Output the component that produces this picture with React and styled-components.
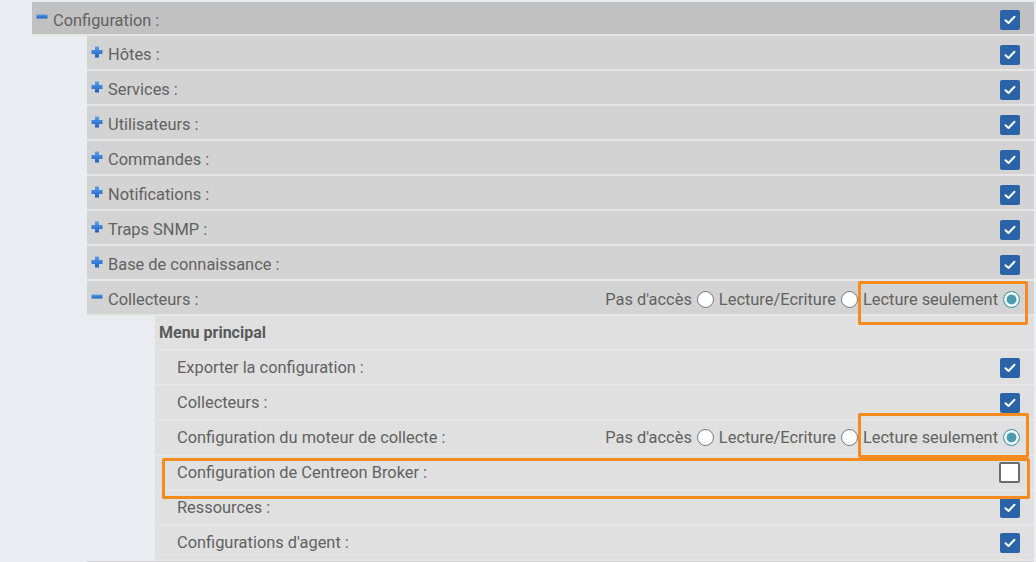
import styled, { createGlobalStyle } from "styled-components";

const GlobalStyle = createGlobalStyle`
  body {
    margin: 0;
    background: #e9edf2;
    font-family: Roboto, "Liberation Sans", sans-serif;
    color: #626262;
    overflow: hidden;
  }
`;

const level1 = [
  "Hôtes",
  "Services",
  "Utilisateurs",
  "Commandes",
  "Notifications",
  "Traps SNMP",
  "Base de connaissance",
];

const level2 = [
  { label: "Exporter la configuration", type: "check" },
  { label: "Collecteurs", type: "check" },
  { label: "Configuration du moteur de collecte", type: "radio" },
  { label: "Configuration de Centreon Broker", type: "empty" },
  { label: "Ressources", type: "check" },
  { label: "Configurations d'agent", type: "check" },
];

const Expander = ({ open }) =>
  open ? (
    <svg width="12" height="12" viewBox="0 0 12 12">
      <defs>
        <linearGradient id="mg" x1="0" y1="0" x2="0" y2="1">
          <stop offset="0" stopColor="#5aa0ea" />
          <stop offset="1" stopColor="#1b5fc0" />
        </linearGradient>
      </defs>
      <rect x="0.5" y="3.5" width="11" height="4" rx="0.5" fill="url(#mg)" />
    </svg>
  ) : (
    <svg width="12" height="12" viewBox="0 0 12 12">
      <defs>
        <linearGradient id="pg" x1="0" y1="0" x2="0" y2="1">
          <stop offset="0" stopColor="#5aa0ea" />
          <stop offset="1" stopColor="#1b5fc0" />
        </linearGradient>
      </defs>
      <path d="M4 0.5h4v3.5h3.5v4H8v3.5H4V8H0.5V4H4z" fill="url(#pg)" />
    </svg>
  );

const Check = () => (
  <CheckBox>
    <svg width="12" height="10" viewBox="0 0 12 10">
      <path d="M1.5 5.2 4.5 8 10.5 1.8" fill="none" stroke="#fff" strokeWidth="2" strokeLinecap="round" strokeLinejoin="round" />
    </svg>
  </CheckBox>
);

const Access = () => (
  <Radios>
    Pas d'accès <Radio />
    Lecture/Ecriture <Radio />
    Lecture seulement <Radio checked />
  </Radios>
);

const App = () => {
  return (
    <>
      <GlobalStyle />
      <Page>
        <Row tone="top" indent={4}>
          <Label>
            <Expander open />
            Configuration :
          </Label>
          <Check />
        </Row>
        <Children offset={55}>
          {level1.map((l) => (
            <Row key={l} tone="mid" indent={4}>
              <Label>
                <Expander />
                {l} :
              </Label>
              <Check />
            </Row>
          ))}
          <Row tone="mid" indent={4}>
            <Label>
              <Expander open />
              Collecteurs :
            </Label>
            <Access />
            <Highlight style={{ left: 771, top: 0, width: 170, height: 44 }} />
          </Row>
          <Children offset={68}>
            <Row tone="light" indent={4}>
              <Heading>Menu principal</Heading>
            </Row>
            {level2.map((item) => (
              <Row key={item.label} tone="light" indent={22}>
                <Label>{item.label} :</Label>
                {item.type === "check" && <Check />}
                {item.type === "empty" && <EmptyBox />}
                {item.type === "radio" && <Access />}
                {item.type === "radio" && (
                  <Highlight style={{ left: 703, top: -8, width: 171, height: 45 }} />
                )}
                {item.type === "empty" && (
                  <Highlight style={{ left: 7, top: 2, width: 868, height: 41 }} />
                )}
              </Row>
            ))}
          </Children>
          <Row tone="mid" indent={4} />
        </Children>
      </Page>
    </>
  );
};

const Page = styled.div`
  padding: 2px 2px 0 32px;
`;

const Children = styled.div`
  margin-left: ${(p) => p.offset}px;
`;

const tones = {
  top: "#c1c1c1",
  mid: "#d3d3d3",
  light: "#e0e0e0",
};

const Row = styled.div`
  position: relative;
  box-sizing: border-box;
  display: flex;
  align-items: center;
  justify-content: space-between;
  height: ${(p) => (p.tone === "top" ? 34 : 35)}px;
  padding: ${(p) => (p.tone === "light" ? 0 : 4)}px 14px 0 ${(p) => p.indent}px;
  background: ${(p) => tones[p.tone]};
  border-bottom: 2px solid #e6e6e6;
  font-size: 16.4px;
`;

const Label = styled.div`
  display: flex;
  align-items: center;
  gap: 5px;
  svg {
    margin-top: -6px;
  }
`;

const Heading = styled.div`
  font-weight: bold;
  font-size: 16px;
  color: #5a5a5a;
`;

const CheckBox = styled.span`
  display: inline-flex;
  align-items: center;
  justify-content: center;
  width: 20px;
  height: 20px;
  border-radius: 2px;
  background: #2a63a8;
`;

const EmptyBox = styled.span`
  width: 17px;
  height: 17px;
  border: 2px solid #6b6b6b;
  border-radius: 2px;
  background: #fff;
`;

const Radios = styled.div`
  display: flex;
  align-items: center;
  gap: 5px;
`;

const Radio = styled.span`
  display: inline-block;
  width: 15px;
  height: 15px;
  border-radius: 50%;
  border: 1px solid ${(p) => (p.checked ? "#4a9db0" : "#777")};
  background: ${(p) => (p.checked ? "#4a9db0" : "#fff")};
  box-shadow: ${(p) => (p.checked ? "inset 0 0 0 2.5px #fff" : "none")};
`;

const Highlight = styled.div`
  position: absolute;
  z-index: 2;
  border: 3px solid #f58a1f;
  border-radius: 2px;
  box-sizing: border-box;
  pointer-events: none;
`;

export default App;
